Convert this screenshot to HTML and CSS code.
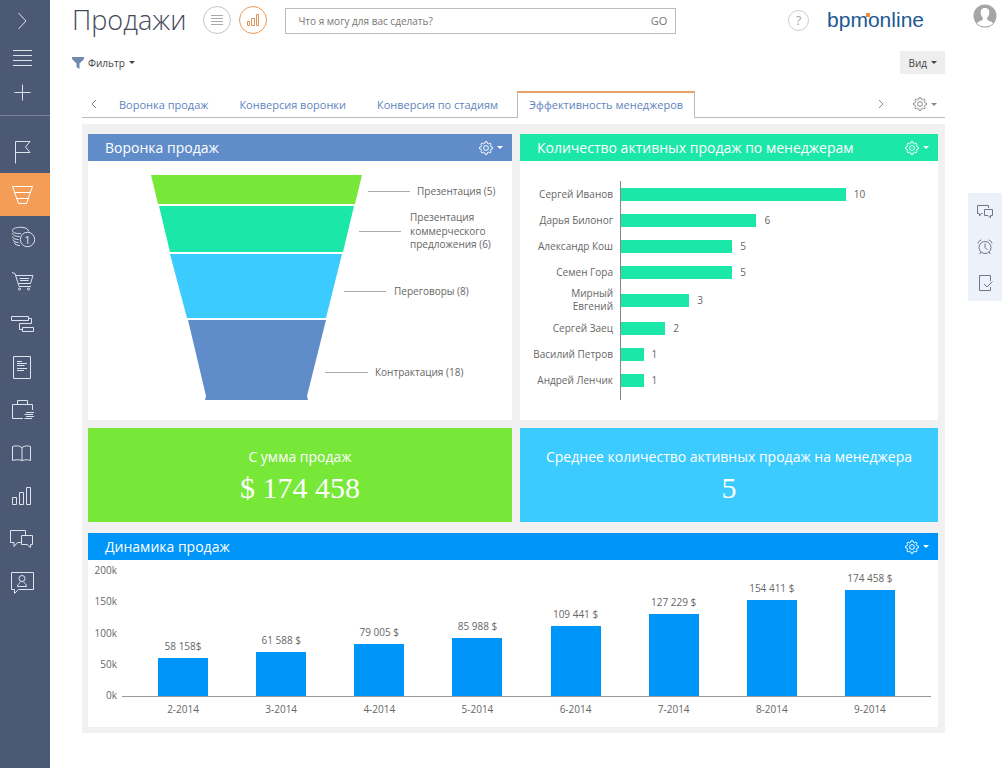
FILE: index.html
```html
<!DOCTYPE html>
<html lang="ru">
<head>
<meta charset="utf-8">
<title>Продажи</title>
<meta name="viewport" content="width=device-width, initial-scale=1">
<link rel="stylesheet" href="styles.css">
</head>
<body>
<svg class="sprite" aria-hidden="true">
  <symbol id="gear" viewBox="0 0 14 14">
    <path d="M5.6 2.4 6 .8h2l.4 1.6 1.1.5 1.4-.9 1.2 1.2-.8 1.4.5 1.1 1.6.4v1.8l-1.6.4-.5 1.1.8 1.4-1.2 1.2-1.4-.8-1.1.5-.4 1.6H6l-.4-1.6-1.1-.5-1.4.8-1.2-1.2.8-1.4-.5-1.1-1.6-.4V6.100l1.600-.4.5-1.100-.8-1.400L3.100 2l1.400.9z"/>
    <circle cx="7" cy="7" r="2.400"/>
  </symbol>
  <symbol id="chat" viewBox="0 0 28 28">
    <path d="M13 17.500H9.500L6 21.500V17.500H2.500V5.500H17.500V10"/>
    <path d="M13.500 10.500H24.500V19.500H22.500V22.500L19 19.500H13.500Z"/>
  </symbol>
  <symbol id="bars" viewBox="0 0 28 28">
    <path d="M4.500 15.500h4v7h-4zM11.500 10.500h4v12h-4zM18.500 5.500h4v17h-4z"/>
  </symbol>
</svg>

<div class="app">
  <aside class="sidebar">
    <div class="side-top">
      <button class="side-item side-expand" aria-label="Развернуть"><svg class="icon" viewBox="0 0 28 28"><path d="M10.500 6L18 14L10.500 22"/></svg></button>
      <button class="side-item" aria-label="Меню"><svg class="icon" viewBox="0 0 28 28"><path d="M5 5.500H24M5 10.500H24M5 15.500H24M5 20.500H24"/></svg></button>
      <button class="side-item" aria-label="Добавить"><svg class="icon" viewBox="0 0 28 28"><path d="M6.500 13.500H22.500M14.500 5.500V21.500"/></svg></button>
    </div>
    <nav class="side-nav" aria-label="Разделы">
      <a class="side-link" href="#" aria-label="Лиды"><svg class="icon" viewBox="0 0 28 28"><path d="M7.500 25.500V3.500H22L17.500 9L22 14.500H7.500"/></svg></a>
      <a class="side-link active" href="#" aria-label="Продажи"><svg class="icon" viewBox="0 0 28 28"><path d="M4.500 5.500H24.500L18.500 22.500H10.500ZM6.500 11.500H22.500M8.500 17.500H20.500"/></svg></a>
      <a class="side-link" href="#" aria-label="Платежи"><svg class="icon" viewBox="0 0 28 28"><path d="M20.500 7.500C20.500 1.500 4.500 2.500 4.500 6.500C4.500 8.500 8 10 13 9.500M4.500 9C4.500 11 7 12.500 11.500 12.500M4.500 12.500C5 14.500 7 15.500 10.500 15.500M5 15.500C5.500 17.500 7.500 18.500 10.500 18.500M6 18.500C7 20.500 9 21.500 12 21.500"/><circle cx="19.500" cy="15.500" r="7.200"/><text class="coin-text" x="19.500" y="19.500">1</text></svg></a>
      <a class="side-link" href="#" aria-label="Заказы"><svg class="icon" viewBox="0 0 28 28"><path d="M4 5.500L7 6.500L11 19.500H23M7.500 8.500H25L22.500 16.500H10.500M11.500 11.500H21M12 13.500H20.500"/><circle cx="11.500" cy="22" r="1"/><circle cx="20.500" cy="22" r="1"/></svg></a>
      <a class="side-link" href="#" aria-label="Проекты"><svg class="icon" viewBox="0 0 28 28"><path d="M3.500 6.500h17v4h-17zM14.500 17.500h11v4h-11zM20.500 8.500H23.500V13.500H11.500V19.500H14.500"/></svg></a>
      <a class="side-link" href="#" aria-label="Документы"><svg class="icon" viewBox="0 0 28 28"><path d="M5.500 3.500h17v22h-17zM9 8.500H14M9 10.500H19M9 12.500H16.500M9 15.500H19M9 17.500H16"/></svg></a>
      <a class="side-link" href="#" aria-label="Портфель"><svg class="icon" viewBox="0 0 28 28"><path d="M15 22.500H4.500V8.500H24.500V14M9.500 8.500V4.500H19.500V8.500M18 16.500H26M16.500 18.500H25M18 20.500H26M16.500 22.500H24"/></svg></a>
      <a class="side-link" href="#" aria-label="База знаний"><svg class="icon" viewBox="0 0 28 28"><path d="M14 8.500C11 6.500 8 6.500 4.500 7.500V21.500C8 20.500 11 20.500 14 21.500C17 20.500 20 20.500 22.500 21.500V7.500C20 6.500 17 6.500 14 8.500ZM14 8.500V21.500"/></svg></a>
      <a class="side-link" href="#" aria-label="Итоги"><svg class="icon"><use href="#bars"/></svg></a>
      <a class="side-link" href="#" aria-label="Лента"><svg class="icon"><use href="#chat"/></svg></a>
      <a class="side-link" href="#" aria-label="Контакты"><svg class="icon" viewBox="0 0 28 28"><path d="M3.500 4.500H25.500V21.500H10.500L6.500 25.500V21.500H3.500ZM9.500 18.500C9.500 15.500 12 15.500 12.500 13.500M18.500 18.500C18.500 15.500 16 15.500 15.500 13.500M9.500 18.500H18.500"/><circle cx="14" cy="10.500" r="3"/></svg></a>
    </nav>
  </aside>

  <main class="main">
    <header class="header">
      <h1 class="title">Продажи</h1>
      <div class="modes">
        <button class="mode" aria-label="Список"><svg class="icon mode-icon" viewBox="0 0 14 14"><path d="M1 2.500H13M1 5.500H13M1 8.500H13M1 11.500H13"/></svg></button>
        <button class="mode mode-on" aria-label="Итоги"><svg class="icon mode-icon" viewBox="0 0 14 14"><path d="M1.500 8.500h2v4h-2zM5.500 5.500h3v7h-3zM10.500 1.500h2v11h-2z"/></svg></button>
      </div>
      <form class="search">
        <input class="search-input" type="text" aria-label="Команда" placeholder="Что я могу для вас сделать?">
        <button class="search-go" type="button">GO</button>
      </form>
      <div class="brand">
        <button class="help" aria-label="Помощь">?</button>
        <span class="logo">bpm<i class="logo-dot"></i>online</span>
      </div>
    </header>

    <div class="toolbar">
      <button class="filter"><svg class="filter-icon" viewBox="0 0 12 12"><path d="M0 0H12V2L7.500 6.500V12L4.500 10V6.500L0 2Z"/></svg>Фильтр<span class="caret"></span></button>
      <button class="view">Вид<span class="caret"></span></button>
    </div>

    <nav class="tabs" aria-label="Панели">
      <button class="tab-arrow" aria-label="Назад"><svg class="icon arrow-icon" viewBox="0 0 8 10"><path d="M6 1L2 5L6 9"/></svg></button>
      <div class="tab-list">
        <a class="tab" href="#">Воронка продаж</a>
        <a class="tab" href="#">Конверсия воронки</a>
        <a class="tab" href="#">Конверсия по стадиям</a>
        <a class="tab tab-on" href="#" aria-current="page">Эффективность менеджеров</a>
      </div>
      <div class="tab-tools">
        <button class="tab-arrow" aria-label="Вперед"><svg class="icon arrow-icon" viewBox="0 0 8 10"><path d="M2 1L6 5L2 9"/></svg></button>
        <button class="gear" aria-label="Настройки"><svg class="icon gear-icon"><use href="#gear"/></svg><span class="caret"></span></button>
      </div>
    </nav>

    <div class="dashboard">
      <div class="widgets">
        <section class="card">
          <div class="card-head head-steel">
            <h2 class="card-title">Воронка продаж</h2>
            <button class="gear" aria-label="Настройки"><svg class="icon gear-icon"><use href="#gear"/></svg><span class="caret"></span></button>
          </div>
          <svg class="funnel" viewBox="0 0 424 259" role="img" aria-label="Воронка продаж">
            <path class="fill-green" d="M63 14H274L267 43H70Z"/>
            <path class="fill-mint" d="M71 45H266L255 91H82Z"/>
            <path class="fill-sky" d="M82 93H254L238 157H99Z"/>
            <path class="fill-steel" d="M100 159H238L219 235L220 239H117L118 235Z"/>
            <path class="leader" d="M280 30.500H322M271 70.500H313M256 130.500H298M237 211.500H280"/>
            <text class="label" x="329" y="34">Презентация (5)</text>
            <text class="label" x="322" y="60">Презентация</text>
            <text class="label" x="322" y="74">коммерческого</text>
            <text class="label" x="322" y="87">предложения (6)</text>
            <text class="label" x="306" y="134">Переговоры (8)</text>
            <text class="label" x="287" y="215">Контрактация (18)</text>
          </svg>
        </section>

        <section class="card">
          <div class="card-head head-mint">
            <h2 class="card-title">Количество активных продаж по менеджерам</h2>
            <button class="gear" aria-label="Настройки"><svg class="icon gear-icon"><use href="#gear"/></svg><span class="caret"></span></button>
          </div>
          <div class="managers">
            <div class="names">
              <span class="name">Сергей Иванов</span>
              <span class="name">Дарья Билоног</span>
              <span class="name">Александр Кош</span>
              <span class="name">Семен Гора</span>
              <span class="name name-two">Мирный<br>Евгений</span>
              <span class="name">Сергей Заец</span>
              <span class="name">Василий Петров</span>
              <span class="name">Андрей Ленчик</span>
            </div>
            <div class="tracks">
              <div class="track"><span class="bar" style="width:74.7%"></span>10</div>
              <div class="track"><span class="bar" style="width:45%"></span>6</div>
              <div class="track"><span class="bar" style="width:37%"></span>5</div>
              <div class="track"><span class="bar" style="width:37%"></span>5</div>
              <div class="track track-two"><span class="bar" style="width:22.7%"></span>3</div>
              <div class="track"><span class="bar" style="width:14.7%"></span>2</div>
              <div class="track"><span class="bar" style="width:7.5%"></span>1</div>
              <div class="track"><span class="bar" style="width:7.5%"></span>1</div>
            </div>
          </div>
        </section>

        <section class="metric metric-green">
          <h2 class="metric-title">С умма продаж</h2>
          <p class="metric-value">$ 174 458</p>
        </section>
        <section class="metric metric-sky">
          <h2 class="metric-title">Среднее количество активных продаж на менеджера</h2>
          <p class="metric-value">5</p>
        </section>
      </div>

      <section class="card">
        <div class="card-head head-blue">
          <h2 class="card-title">Динамика продаж</h2>
          <button class="gear" aria-label="Настройки"><svg class="icon gear-icon"><use href="#gear"/></svg><span class="caret"></span></button>
        </div>
        <div class="dynamics">
          <div class="scale"><span>200k</span><span>150k</span><span>100k</span><span>50k</span><span>0k</span></div>
          <div class="plot">
            <div class="columns">
              <div class="column">58 158$<span class="column-bar" style="height:38px"></span></div>
              <div class="column">61 588 $<span class="column-bar" style="height:44px"></span></div>
              <div class="column">79 005 $<span class="column-bar" style="height:52px"></span></div>
              <div class="column">85 988 $<span class="column-bar" style="height:58px"></span></div>
              <div class="column">109 441 $<span class="column-bar" style="height:70px"></span></div>
              <div class="column">127 229 $<span class="column-bar" style="height:82px"></span></div>
              <div class="column">154 411 $<span class="column-bar" style="height:96px"></span></div>
              <div class="column">174 458 $<span class="column-bar" style="height:106px"></span></div>
            </div>
            <div class="months"><span>2-2014</span><span>3-2014</span><span>4-2014</span><span>5-2014</span><span>6-2014</span><span>7-2014</span><span>8-2014</span><span>9-2014</span></div>
          </div>
        </div>
      </section>
    </div>
  </main>

  <aside class="right">
    <button class="avatar" aria-label="Профиль"><svg class="avatar-icon" viewBox="0 0 24 24"><circle class="avatar-bg" cx="12" cy="12" r="11.500"/><path class="avatar-man" d="M12 4C8.500 4 7.500 6.500 7.700 9C7.900 11 8.500 12.500 9.800 13.700V15.500C9 17 5 17.200 4 19.500C8 23.500 16 23.500 20 19.500C19 17.200 15 17 14.200 15.500V13.700C15.500 12.500 16.100 11 16.300 9C16.500 6.500 15.500 4 12 4Z"/></svg></button>
    <div class="rail">
      <button class="rail-item" aria-label="Сообщения"><svg class="icon rail-icon" viewBox="0 0 18 18"><path d="M6.500 11.500H5.500L3.500 14V11.500H1.500V3.500H12.500V6M8.500 7.500H16.500V13.500H14.500V16L12 13.500H8.500Z"/></svg></button>
      <button class="rail-item" aria-label="Напоминания"><svg class="icon rail-icon" viewBox="0 0 18 18"><circle cx="9" cy="9.500" r="6"/><path d="M9 5.500V9.500L11.500 12M2 5.500C2.500 3.500 3.500 2.500 5.500 2M16 5.500C15.500 3.500 14.500 2.500 12.500 2M5 14L3.500 16M13 14L14.500 16"/></svg></button>
      <button class="rail-item" aria-label="Задачи"><svg class="icon rail-icon" viewBox="0 0 18 18"><path d="M14.500 7V1.500H3.500V16.500H14.500V13M8 10L11 13L16.500 7.500"/></svg></button>
    </div>
  </aside>
</div>
</body>
</html>
```

FILE: styles.css
```css
* { box-sizing: border-box; }

body {
  margin: 0;
  background: #fff;
  color: #666;
  font-family: "Open Sans", "Noto Sans", sans-serif;
  font-size: 10px;
  line-height: 16px;
}

h1, h2, p { margin: 0; font-weight: 400; }
a { color: inherit; text-decoration: none; }
button { margin: 0; padding: 0; border: 0; background: none; color: inherit; font: inherit; cursor: pointer; }

.sprite { position: absolute; width: 0; height: 0; }
.icon { display: block; width: 28px; height: 28px; fill: none; stroke: currentColor; stroke-width: 1; }

.app { display: flex; min-height: 100vh; }

/* Left navigation */
.sidebar { flex: none; width: 50px; background: #4c5974; color: #dce3ef; }
.side-top { display: flex; flex-direction: column; height: 116px; margin-bottom: 14px; border-bottom: 1px solid #75809a; }
.side-item { display: flex; align-items: center; justify-content: center; height: 34px; padding-right: 6px; }
.side-expand { height: 42px; }
.side-nav { display: flex; flex-direction: column; }
.side-link { display: flex; align-items: center; justify-content: center; height: 43px; padding-right: 6px; }
.side-link.active { background: #f49d56; color: #fff; }
.coin-text { fill: currentColor; stroke: none; font-size: 11px; text-anchor: middle; }

/* Header */
.main { flex: 1; min-width: 0; padding-left: 22px; }
.header { display: flex; align-items: center; height: 40px; }
.title { margin-right: 17px; color: #44495c; font-size: 27px; font-weight: 300; line-height: 40px; }
.modes { display: flex; gap: 8px; margin-right: 18px; }
.mode { display: flex; align-items: center; justify-content: center; width: 28px; height: 28px; border: 1px solid #c4c4c4; border-radius: 50%; color: #aaa; }
.mode-on { border-color: #ea9a5a; color: #e0914f; }
.mode-icon { width: 14px; height: 14px; }
.search { display: flex; flex: 1; max-width: 391px; height: 26px; margin-top: 2px; border: 1px solid #bcbcbc; }
.search-input { flex: 1; min-width: 0; padding: 0 12px; border: 0; outline: 0; color: #555; font: inherit; }
.search-input::placeholder { color: #777; opacity: 1; }
.search-go { padding: 0 8px; color: #777; font-size: 11px; }
.brand { display: flex; align-items: center; gap: 18px; margin-left: auto; padding-right: 21px; }
.help { width: 21px; height: 21px; border: 1px solid #ccc; border-radius: 50%; color: #aaa; font-size: 13px; line-height: 18px; }
.logo { position: relative; color: #1d5894; font-family: "Liberation Sans", Arial, sans-serif; font-size: 21px; line-height: 24px; }
.logo-dot { position: absolute; top: 5px; width: 4px; height: 4px; margin-left: -2px; background: #f08a3c; }

/* Filter row */
.toolbar { display: flex; align-items: center; justify-content: space-between; height: 23px; margin-top: 11px; }
.filter { display: flex; align-items: center; gap: 4px; color: #444; }
.filter-icon { width: 12px; height: 12px; fill: #7089ad; }
.view { display: flex; align-items: center; gap: 4px; height: 23px; padding: 0 8px; background: #eee; color: #444; }
.caret { width: 0; height: 0; border: 3px solid transparent; border-top-color: currentColor; border-bottom: 0; }

/* Tabs */
.tabs { display: flex; height: 27px; margin: 17px 0 6px 10px; border-bottom: 1px solid #bbb; color: #888; }
.tab-arrow { display: flex; align-items: center; width: 8px; height: 26px; }
.tabs > .tab-arrow { margin: 0 9px 0 8px; }
.arrow-icon { width: 8px; height: 10px; }
.tab-list { display: flex; gap: 7px; height: 27px; }
.tab { padding: 3px 11px 0; border: 1px solid transparent; color: #5f83bd; font-size: 11px; line-height: 20px; white-space: nowrap; }
.tab-on { padding-top: 2px; border-color: #bbb; border-top: 2px solid #e9a066; border-bottom: 0; background: #fff; }
.tab-tools { display: flex; gap: 28px; margin-left: auto; padding-right: 8px; }
.gear { display: flex; align-items: center; gap: 4px; }
.gear-icon { width: 14px; height: 14px; }

/* Dashboard */
.dashboard { display: flex; flex-direction: column; gap: 11px; margin-left: 10px; padding: 10px 7px 6px 6px; background: #f1f1f1; }
.widgets { display: grid; grid-template-columns: 424fr 418fr; gap: 8px; }
.card { min-width: 0; background: #fff; }
.card-head { display: flex; align-items: center; justify-content: space-between; height: 27px; padding: 0 9px 0 17px; color: #fff; }
.card-title { font-size: 14px; line-height: 20px; }
.head-steel { background: #608dc9; }
.head-mint { background: #1be7a8; }
.head-blue { background: #0095f8; }

.funnel { display: block; width: 100%; height: 259px; }
.label { fill: #666; font-size: 10px; }
.leader { stroke: #aaa; }
.fill-green { fill: #77e838; }
.fill-mint { fill: #1be7a8; }
.fill-sky { fill: #3bcbff; }
.fill-steel { fill: #608dc9; }

.managers { display: grid; grid-template-columns: 100px 1fr; padding-top: 20px; }
.names { padding-right: 7px; text-align: right; }
.name { display: flex; align-items: center; justify-content: flex-end; height: 26px; }
.name-two { height: 30px; line-height: 13px; }
.tracks { height: 219px; padding-right: 16px; border-left: 1px solid #888; }
.track { display: flex; align-items: center; gap: 8px; height: 26px; }
.track-two { height: 30px; }
.bar { flex: none; height: 13px; background: #1be7a8; }

.metric { padding: 17px 8px 16px; color: #fff; text-align: center; }
.metric-green { background: #77e838; }
.metric-sky { background: #3bcbff; }
.metric-title { font-size: 14px; line-height: 24px; }
.metric-value { font-family: "Liberation Serif", "Times New Roman", serif; font-size: 30px; line-height: 37px; }

.dynamics { display: flex; gap: 5px; padding: 2px 7px 10px 5px; }
.scale { display: flex; flex-direction: column; justify-content: space-between; width: 24px; height: 141px; text-align: right; }
.plot { flex: 1; min-width: 0; }
.columns, .months { display: grid; grid-template-columns: repeat(8, 1fr); padding: 0 12px; text-align: center; }
.columns { height: 135px; border-bottom: 1px solid #999; }
.column { display: flex; flex-direction: column; align-items: center; justify-content: flex-end; gap: 4px; }
.column-bar { flex: none; width: 50px; background: #0095f8; }
.months { padding-top: 4px; }

/* Right side */
.right { display: flex; flex: none; flex-direction: column; align-items: center; width: 34px; margin-left: 23px; padding-top: 4px; }
.avatar-icon { display: block; width: 24px; height: 24px; }
.avatar-bg { fill: #a5a5a5; }
.avatar-man { fill: #fff; }
.rail { width: 34px; margin-top: 165px; background: #edf1fa; color: #6e7787; }
.rail-item { display: flex; align-items: center; justify-content: center; width: 34px; height: 36px; }
.rail-icon { width: 18px; height: 18px; }
```
